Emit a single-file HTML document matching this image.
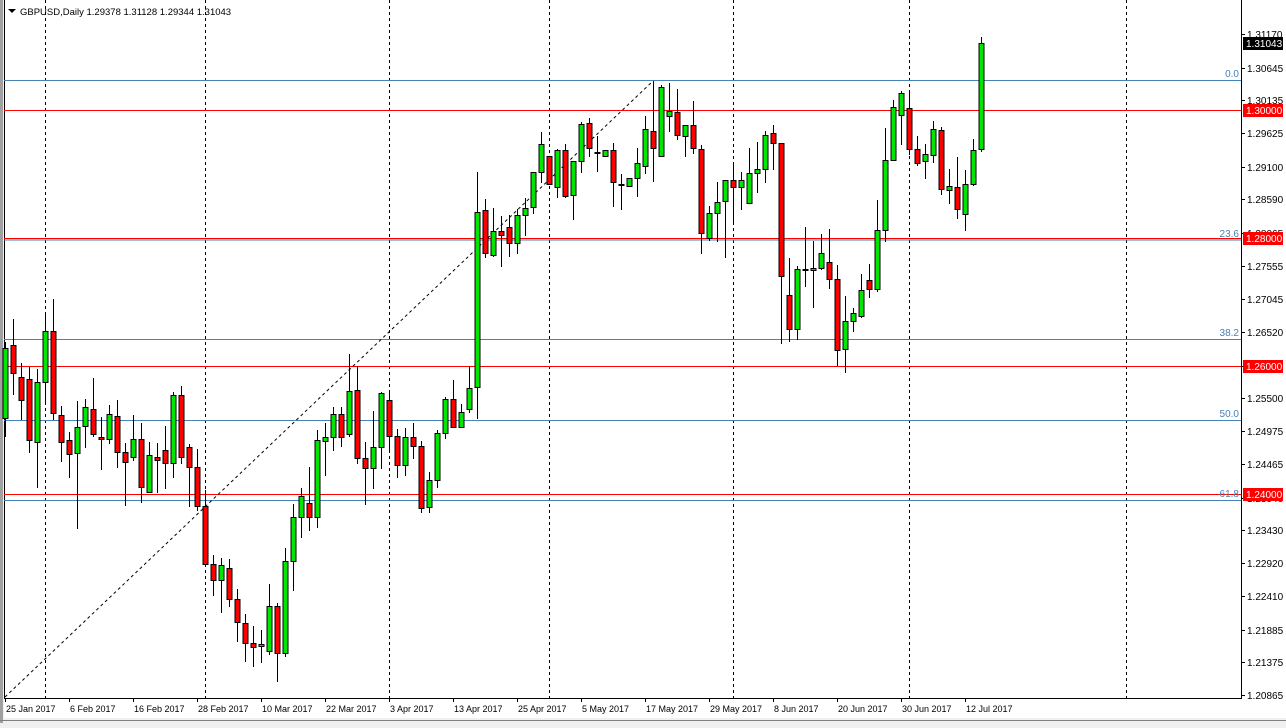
<!DOCTYPE html>
<html><head><meta charset="utf-8">
<style>
html,body{margin:0;padding:0;background:#f0f0f0;width:1286px;height:723px;overflow:hidden}
#wrap{position:absolute;left:0;top:0;width:1286px;height:723px}
svg text{font-family:"Liberation Sans",sans-serif;font-size:10px}
svg text.d{font-size:9px}
svg text.t{font-size:9.5px}
</style></head><body>
<div id="wrap">
<svg id="s" width="1286" height="723" xmlns="http://www.w3.org/2000/svg">
<rect x="0" y="0" width="1286" height="723" fill="#f0f0f0"/>
<rect x="0" y="0" width="3" height="723" fill="#a0a0a0"/>
<rect x="4" y="0" width="1282" height="718" fill="#fff"/>
<line x1="4.5" y1="0" x2="4.5" y2="699" stroke="#000"/>
<line x1="0" y1="720.5" x2="1286" y2="720.5" stroke="#808080"/>
<g id="g"></g>
</svg>
</div>
<script>
var g=document.getElementById('g');var h='';
[45,205,389,549,733,909,1126].forEach(function(x){h+='<line x1="'+(x+.5)+'" y1="0" x2="'+(x+.5)+'" y2="698" stroke="#000" stroke-dasharray="3,3"/>';});
[[80,'#4682b4'],[239.5,'#4682b4'],[339,'#4682b4'],[420,'#4682b4'],[500,'#4682b4'],[110,'#ff0000'],[238,'#ff0000'],[366,'#ff0000'],[494,'#ff0000']].forEach(function(a){h+='<line x1="4" y1="'+(a[0]+.5)+'" x2="1241" y2="'+(a[0]+.5)+'" stroke="'+a[1]+'"/>';});
h+='<line x1="5" y1="697" x2="653" y2="81" stroke="#000" stroke-dasharray="3,3"/>';
[['0.0',77],['23.6',237],['38.2',336],['50.0',417],['61.8',497]].forEach(function(a){h+='<text x="1239" y="'+a[1]+'" text-anchor="end" fill="#4682b4">'+a[0]+'</text>';});
var c=[
[1,348,418,342,437],[0,345,373,319,395],[0,377,400,363,420],[0,379,440,367,453],[1,382,442,369,488],
[1,331,382,315,403],[0,331,413,299,420],[0,415,442,406,462],[0,440,454,432,478],[1,427,453,401,529],
[1,407,426,399,448],[0,409,434,378,437],[0,437,439,417,470],[1,414,439,405,444],[0,416,452,400,468],
[0,452,462,443,506],[1,439,457,415,461],[0,439,487,423,503],[1,455,492,442,493],[0,457,460,443,493],
[0,450,463,426,489],[1,395,463,392,478],[0,395,457,386,464],[0,447,467,444,507],[0,467,506,449,511],
[0,506,564,490,566],[0,564,580,555,596],[1,565,580,558,613],[0,568,599,559,607],[0,599,622,589,642],
[0,623,643,614,662],[0,643,647,626,667],[1,644,646,630,663],[1,606,651,584,655],[0,606,653,603,682],
[1,561,653,548,657],[1,517,561,504,591],[1,496,517,488,538],[0,503,517,467,531],[1,440,517,430,528],
[1,437,441,423,476],[1,414,437,407,451],[0,414,437,407,447],[1,391,434,354,437],[0,390,458,366,464],
[0,458,468,442,505],[1,447,468,411,489],[1,393,447,392,469],[0,400,436,390,452],[0,436,465,429,478],
[1,437,465,428,476],[0,437,446,423,459],[0,446,508,441,513],[1,480,507,472,513],[1,433,480,430,488],
[1,399,433,397,439],[0,399,427,380,428],[1,412,427,404,428],[1,388,409,366,413],[1,212,387,172,419],
[0,210,253,199,258],[1,231,255,208,257],[0,231,235,216,267],[0,227,243,215,257],[1,215,243,209,254],
[1,208,215,198,236],[1,172,207,172,214],[1,144,172,132,183],[0,156,184,156,184],[1,150,187,149,198],
[0,150,196,144,198],[1,161,195,161,220],[1,124,161,122,173],[0,123,148,118,157],[0,152,152,136,172],
[1,150,156,150,156],[0,150,182,143,207],[0,184,184,174,210],[1,178,186,178,186],[1,163,178,148,197],
[1,129,166,116,174],[0,131,148,81,182],[1,87,156,85,157],[1,111,116,83,132],[0,112,135,89,140],
[1,125,136,125,157],[0,125,148,101,154],[0,149,233,145,254],[1,213,238,206,241],[1,202,213,182,242],
[1,180,201,180,258],[0,180,187,164,222],[1,180,187,172,210],[1,173,203,148,204],[1,169,173,142,193],
[1,135,169,131,183],[0,133,143,125,170],[0,143,276,143,344],[0,295,329,258,342],[1,269,329,266,340],
[0,269,269,227,287],[1,268,270,241,308],[1,253,268,234,270],[0,262,279,229,289],[0,279,350,265,366],
[1,321,349,296,373],[1,313,321,308,332],[1,290,316,274,318],[0,280,289,264,298],[1,230,289,200,292],
[1,160,230,128,242],[1,107,160,100,160],[1,93,115,91,145],[0,108,149,93,155],[0,149,163,136,166],
[1,154,161,144,179],[1,129,155,121,163],[0,130,189,127,195],[1,186,190,169,204],[0,187,209,157,219],
[1,184,214,170,231],[1,150,184,139,186],[1,43,149,37,152]];
c.forEach(function(d,i){var x=5.5+8*i;
h+='<line x1="'+x+'" y1="'+d[3]+'" x2="'+x+'" y2="'+d[4]+'" stroke="#000"/>';
var t=d[1],b=d[2];if(b-t<1){b=t+1;}
h+='<rect x="'+(x-2.5)+'" y="'+(t+.5)+'" width="5" height="'+(b-t)+'" fill="'+(d[0]?'#00e600':'#ff0000')+'" stroke="#000"/>';});
h+='<line x1="1241.5" y1="0" x2="1241.5" y2="699" stroke="#000"/>';
h+='<line x1="4" y1="698.5" x2="1242" y2="698.5" stroke="#000"/>';
var P=['1.31170','1.30645','1.30135','1.29625','1.29100','1.28590','1.28065','1.27555','1.27045','1.26520','1.26000','1.25500','1.24975','1.24465','1.23940','1.23430','1.22920','1.22410','1.21885','1.21375','1.20865'];
P.forEach(function(p){var y=34+(1.3117-parseFloat(p))*6414;y=Math.round(y);
h+='<line x1="1241" y1="'+(y+.5)+'" x2="1245" y2="'+(y+.5)+'" stroke="#000"/>';
h+='<text x="1247" y="'+(y+4)+'" fill="#000">'+p+'</text>';});
[['1.31043',43,'#000'],['1.30000',110,'#ff0000'],['1.28000',238,'#ff0000'],['1.26000',366,'#ff0000'],['1.24000',494,'#ff0000']].forEach(function(a){
h+='<rect x="1243" y="'+(a[1]-6)+'" width="40" height="13" fill="'+a[2]+'"/>';
h+='<text x="1246" y="'+(a[1]+4)+'" fill="#fff">'+a[0]+'</text>';});
var D=[['25 Jan 2017',5],['6 Feb 2017',69],['16 Feb 2017',133],['28 Feb 2017',197],['10 Mar 2017',261],['22 Mar 2017',325],['3 Apr 2017',389],['13 Apr 2017',453],['25 Apr 2017',517],['5 May 2017',581],['17 May 2017',645],['29 May 2017',709],['8 Jun 2017',773],['20 Jun 2017',837],['30 Jun 2017',901],['12 Jul 2017',965]];
D.forEach(function(a){h+='<line x1="'+(a[1]+.5)+'" y1="698" x2="'+(a[1]+.5)+'" y2="702" stroke="#000"/>';
h+='<text class="d" x="'+(a[1]+1)+'" y="712" fill="#000">'+a[0]+'</text>';});
h+='<polygon points="8,9 16,9 12,13" fill="#000"/>';
h+='<text class="t" x="20" y="15" fill="#000">GBPUSD,Daily  1.29378 1.31128 1.29344 1.31043</text>';
g.innerHTML=h;
</script>
</body></html>
